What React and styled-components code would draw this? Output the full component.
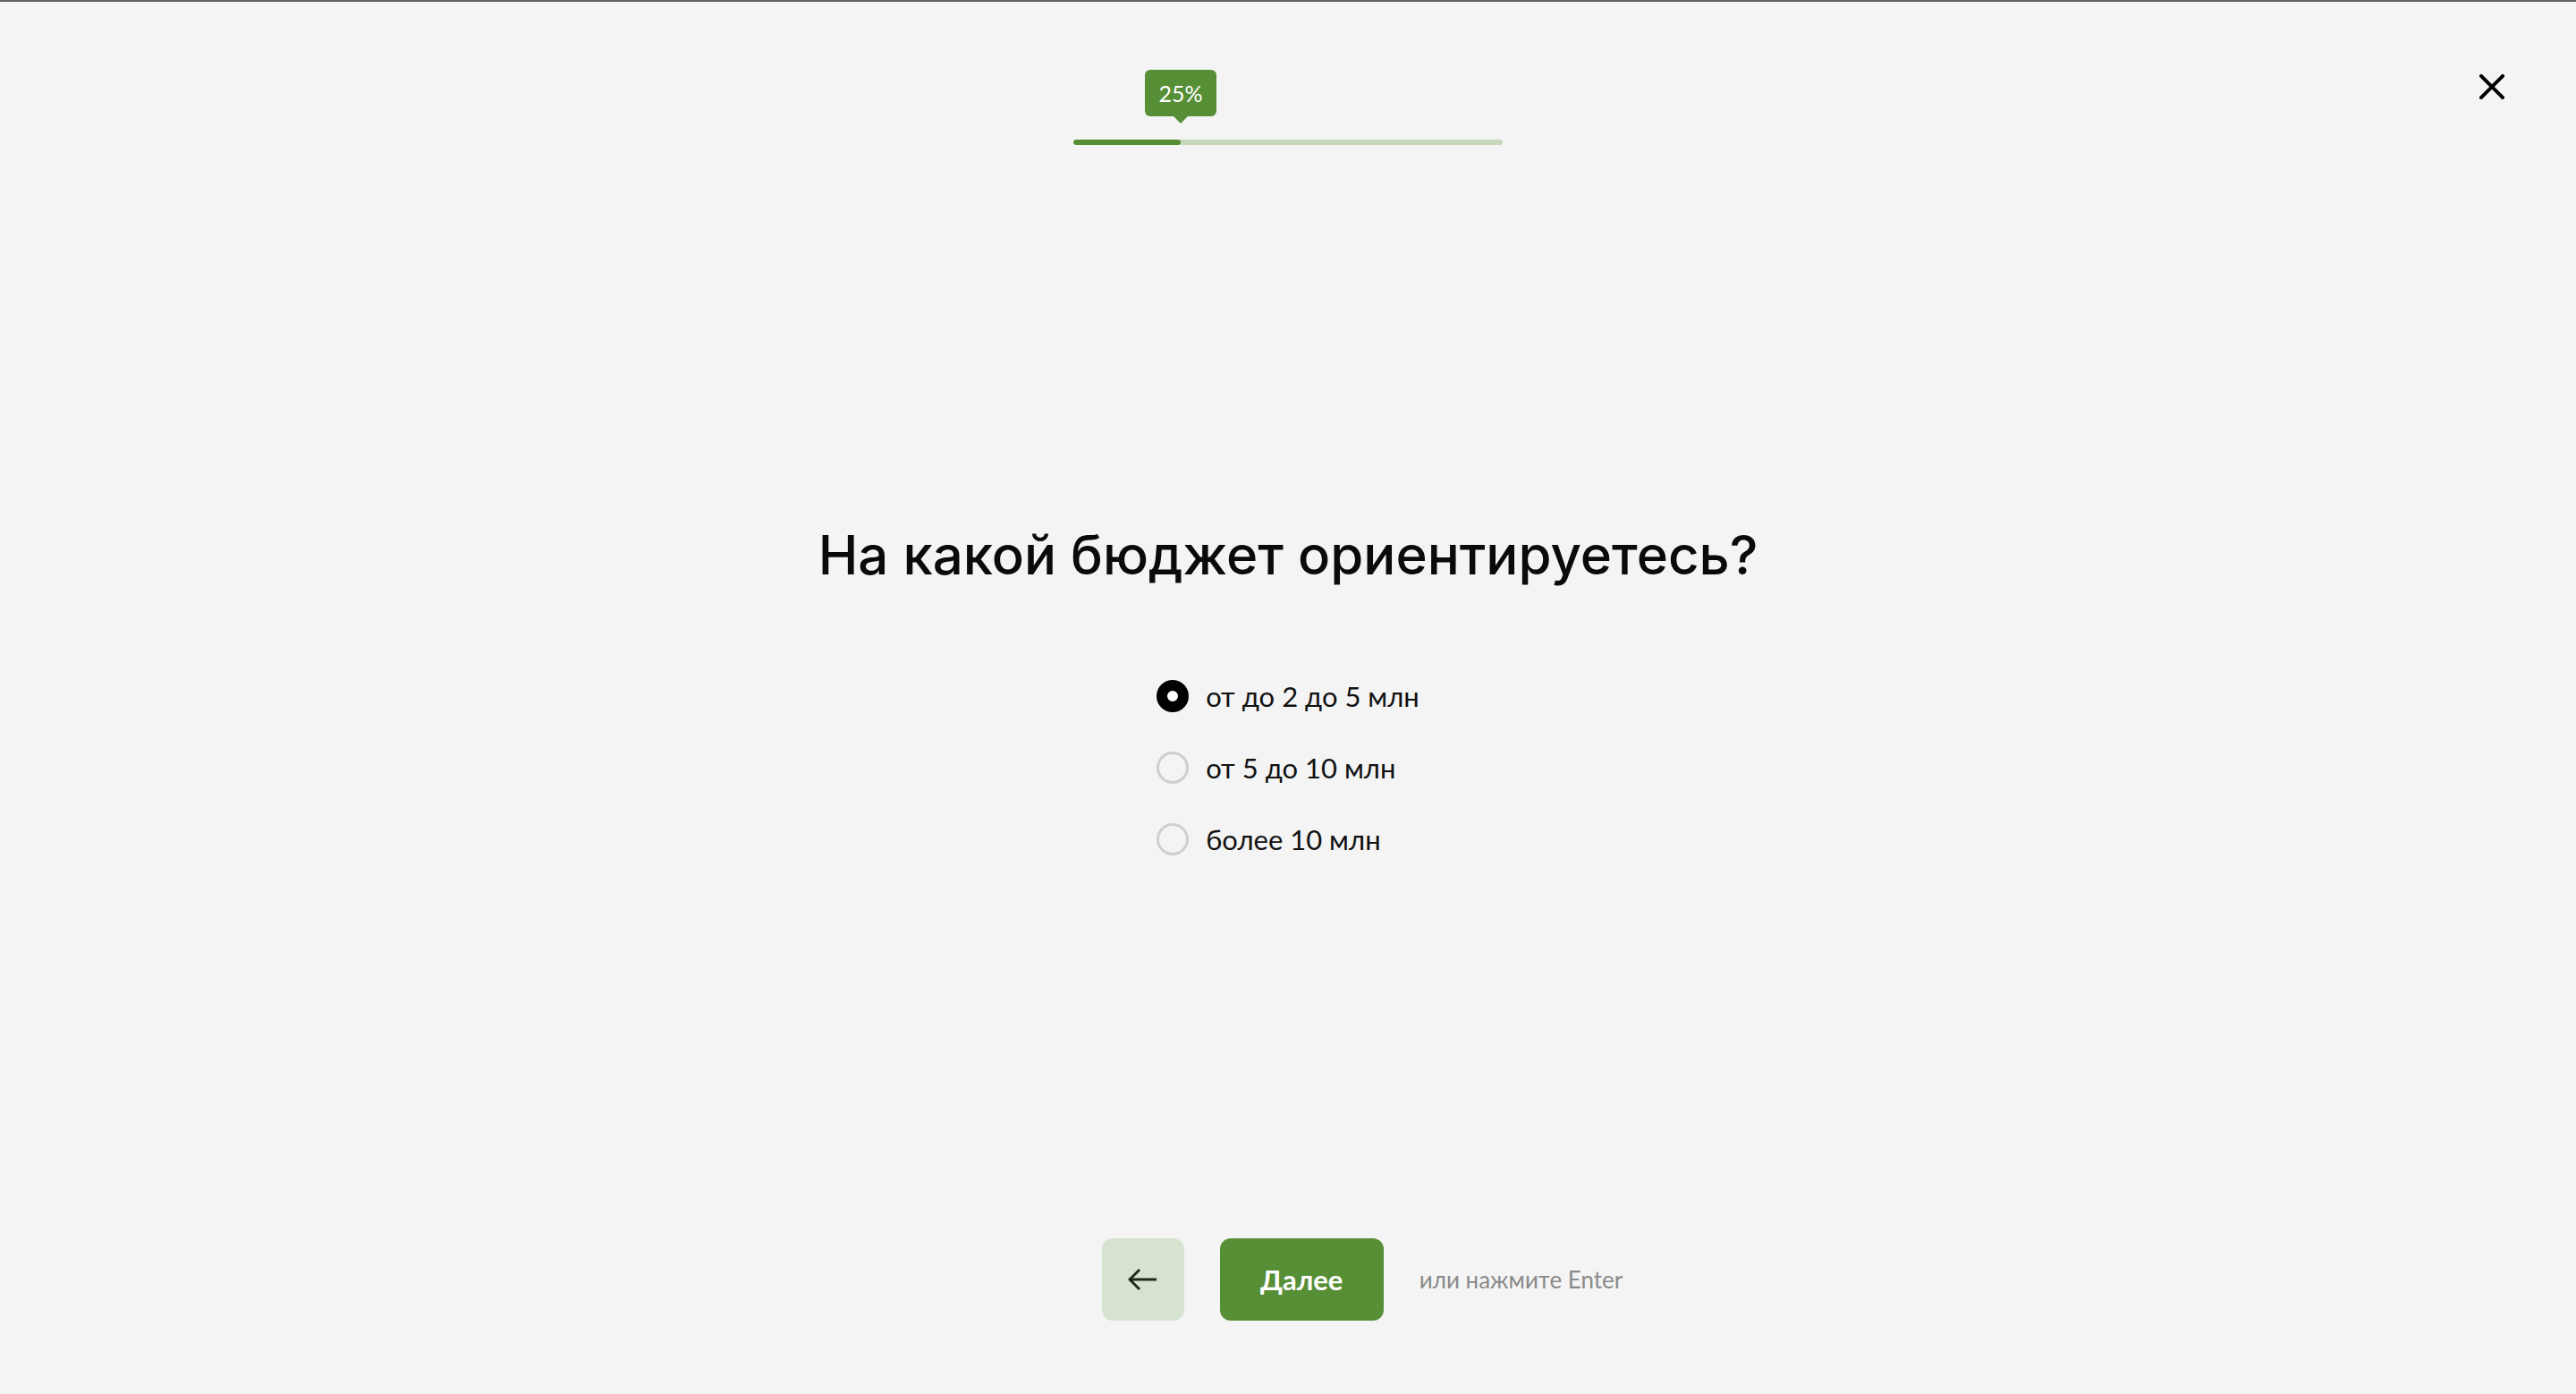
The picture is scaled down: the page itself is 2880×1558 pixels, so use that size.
import React, { useState } from "react";
import styled, { createGlobalStyle } from "styled-components";

const GREEN = "#578f37";

const GlobalStyle = createGlobalStyle`
  html, body {
    margin: 0;
    padding: 0;
  }
  body {
    background: #f4f4f4;
    border-top: 2px solid #5f5f5f;
    font-family: Lato, "Noto Sans", sans-serif;
    color: #0a0a0a;
  }
  * { box-sizing: border-box; }
`;

const Page = styled.div`
  min-height: calc(100vh - 2px);
  display: flex;
  flex-direction: column;
`;

const Header = styled.header`
  display: grid;
  grid-template-columns: 1fr 480px 1fr;
  padding: 76px 80px 0;
`;

const Progress = styled.div`
  grid-column: 2;
  position: relative;
  padding-top: 78px;
`;

const Track = styled.div`
  height: 6px;
  border-radius: 3px;
  background: #c7d7bc;
  overflow: hidden;
`;

const Fill = styled.div`
  height: 100%;
  border-radius: 3px;
  background: ${GREEN};
`;

const Badge = styled.div`
  position: absolute;
  top: 0;
  width: 80px;
  height: 52px;
  border-radius: 6px;
  background: ${GREEN};
  color: #fff;
  font-size: 25px;
  display: flex;
  align-items: center;
  justify-content: center;

  &::after {
    content: "";
    position: absolute;
    left: 50%;
    bottom: -8px;
    margin-left: -8px;
    border-left: 8px solid transparent;
    border-right: 8px solid transparent;
    border-top: 8px solid ${GREEN};
  }
`;

const Close = styled.button`
  grid-column: 3;
  justify-self: end;
  align-self: start;
  margin-top: 5px;
  padding: 0;
  border: 0;
  background: none;
  cursor: pointer;
  display: flex;
`;

const Main = styled.main`
  display: flex;
  flex-direction: column;
  align-items: center;
  margin-top: 422px;
`;

const Title = styled.h1`
  margin: 0;
  font-family: Inter, "Noto Sans", sans-serif;
  font-size: 60px;
  line-height: 72px;
  font-weight: 500;
  color: #0a0a0a;
`;

const Options = styled.div`
  margin-top: 104px;
  display: flex;
  flex-direction: column;
  align-items: flex-start;
  gap: 44px;
`;

const Option = styled.label`
  display: flex;
  align-items: center;
  gap: 19px;
  font-size: 31px;
  line-height: 36px;
  cursor: pointer;
  color: #111;
`;

const Radio = styled.span`
  width: 36px;
  height: 36px;
  border-radius: 50%;
  flex-shrink: 0;
  border: ${(p) => (p.$checked ? "12px solid #000" : "3px solid #cfcfcf")};
  background: ${(p) => (p.$checked ? "#fff" : "transparent")};
`;

const Footer = styled.footer`
  margin-top: auto;
  display: flex;
  justify-content: center;
  align-items: center;
  gap: 40px;
  padding: 0 0 82px 166px;
`;

const BackButton = styled.button`
  width: 92px;
  height: 92px;
  border: 0;
  border-radius: 12px;
  background: #d6e3d1;
  display: flex;
  align-items: center;
  justify-content: center;
  cursor: pointer;
`;

const NextButton = styled.button`
  width: 183px;
  height: 92px;
  border: 0;
  border-radius: 12px;
  background: ${GREEN};
  color: #fff;
  font-family: Lato, "Noto Sans", sans-serif;
  font-size: 31px;
  font-weight: 700;
  cursor: pointer;
`;

const Hint = styled.span`
  font-size: 26px;
  color: #8a8a8a;
`;

const answers = ["от до 2 до 5 млн", "от 5 до 10 млн", "более 10 млн"];

export default function App() {
  const [picked, setPicked] = useState(0);
  const percent = 25;

  return (
    <>
      <GlobalStyle />
      <Page>
        <Header>
          <Progress>
            <Badge style={{ left: `calc(${percent}% - 40px)` }}>{percent}%</Badge>
            <Track>
              <Fill style={{ width: `${percent}%` }} />
            </Track>
          </Progress>
          <Close aria-label="Закрыть">
            <svg width="28" height="28" viewBox="0 0 28 28">
              <path d="M2 2L26 26M26 2L2 26" stroke="#000" strokeWidth="4" strokeLinecap="square" />
            </svg>
          </Close>
        </Header>

        <Main>
          <Title>На какой бюджет ориентируетесь?</Title>
          <Options>
            {answers.map((a, i) => (
              <Option key={i} onClick={() => setPicked(i)}>
                <Radio $checked={picked === i} />
                {a}
              </Option>
            ))}
          </Options>
        </Main>

        <Footer>
          <BackButton aria-label="Назад">
            <svg width="34" height="26" viewBox="0 0 34 26" fill="none">
              <path d="M32 13H3M13 2L2 13L13 24" stroke="#1c2b17" strokeWidth="3" />
            </svg>
          </BackButton>
          <NextButton>Далее</NextButton>
          <Hint>или нажмите Enter</Hint>
        </Footer>
      </Page>
    </>
  );
}
